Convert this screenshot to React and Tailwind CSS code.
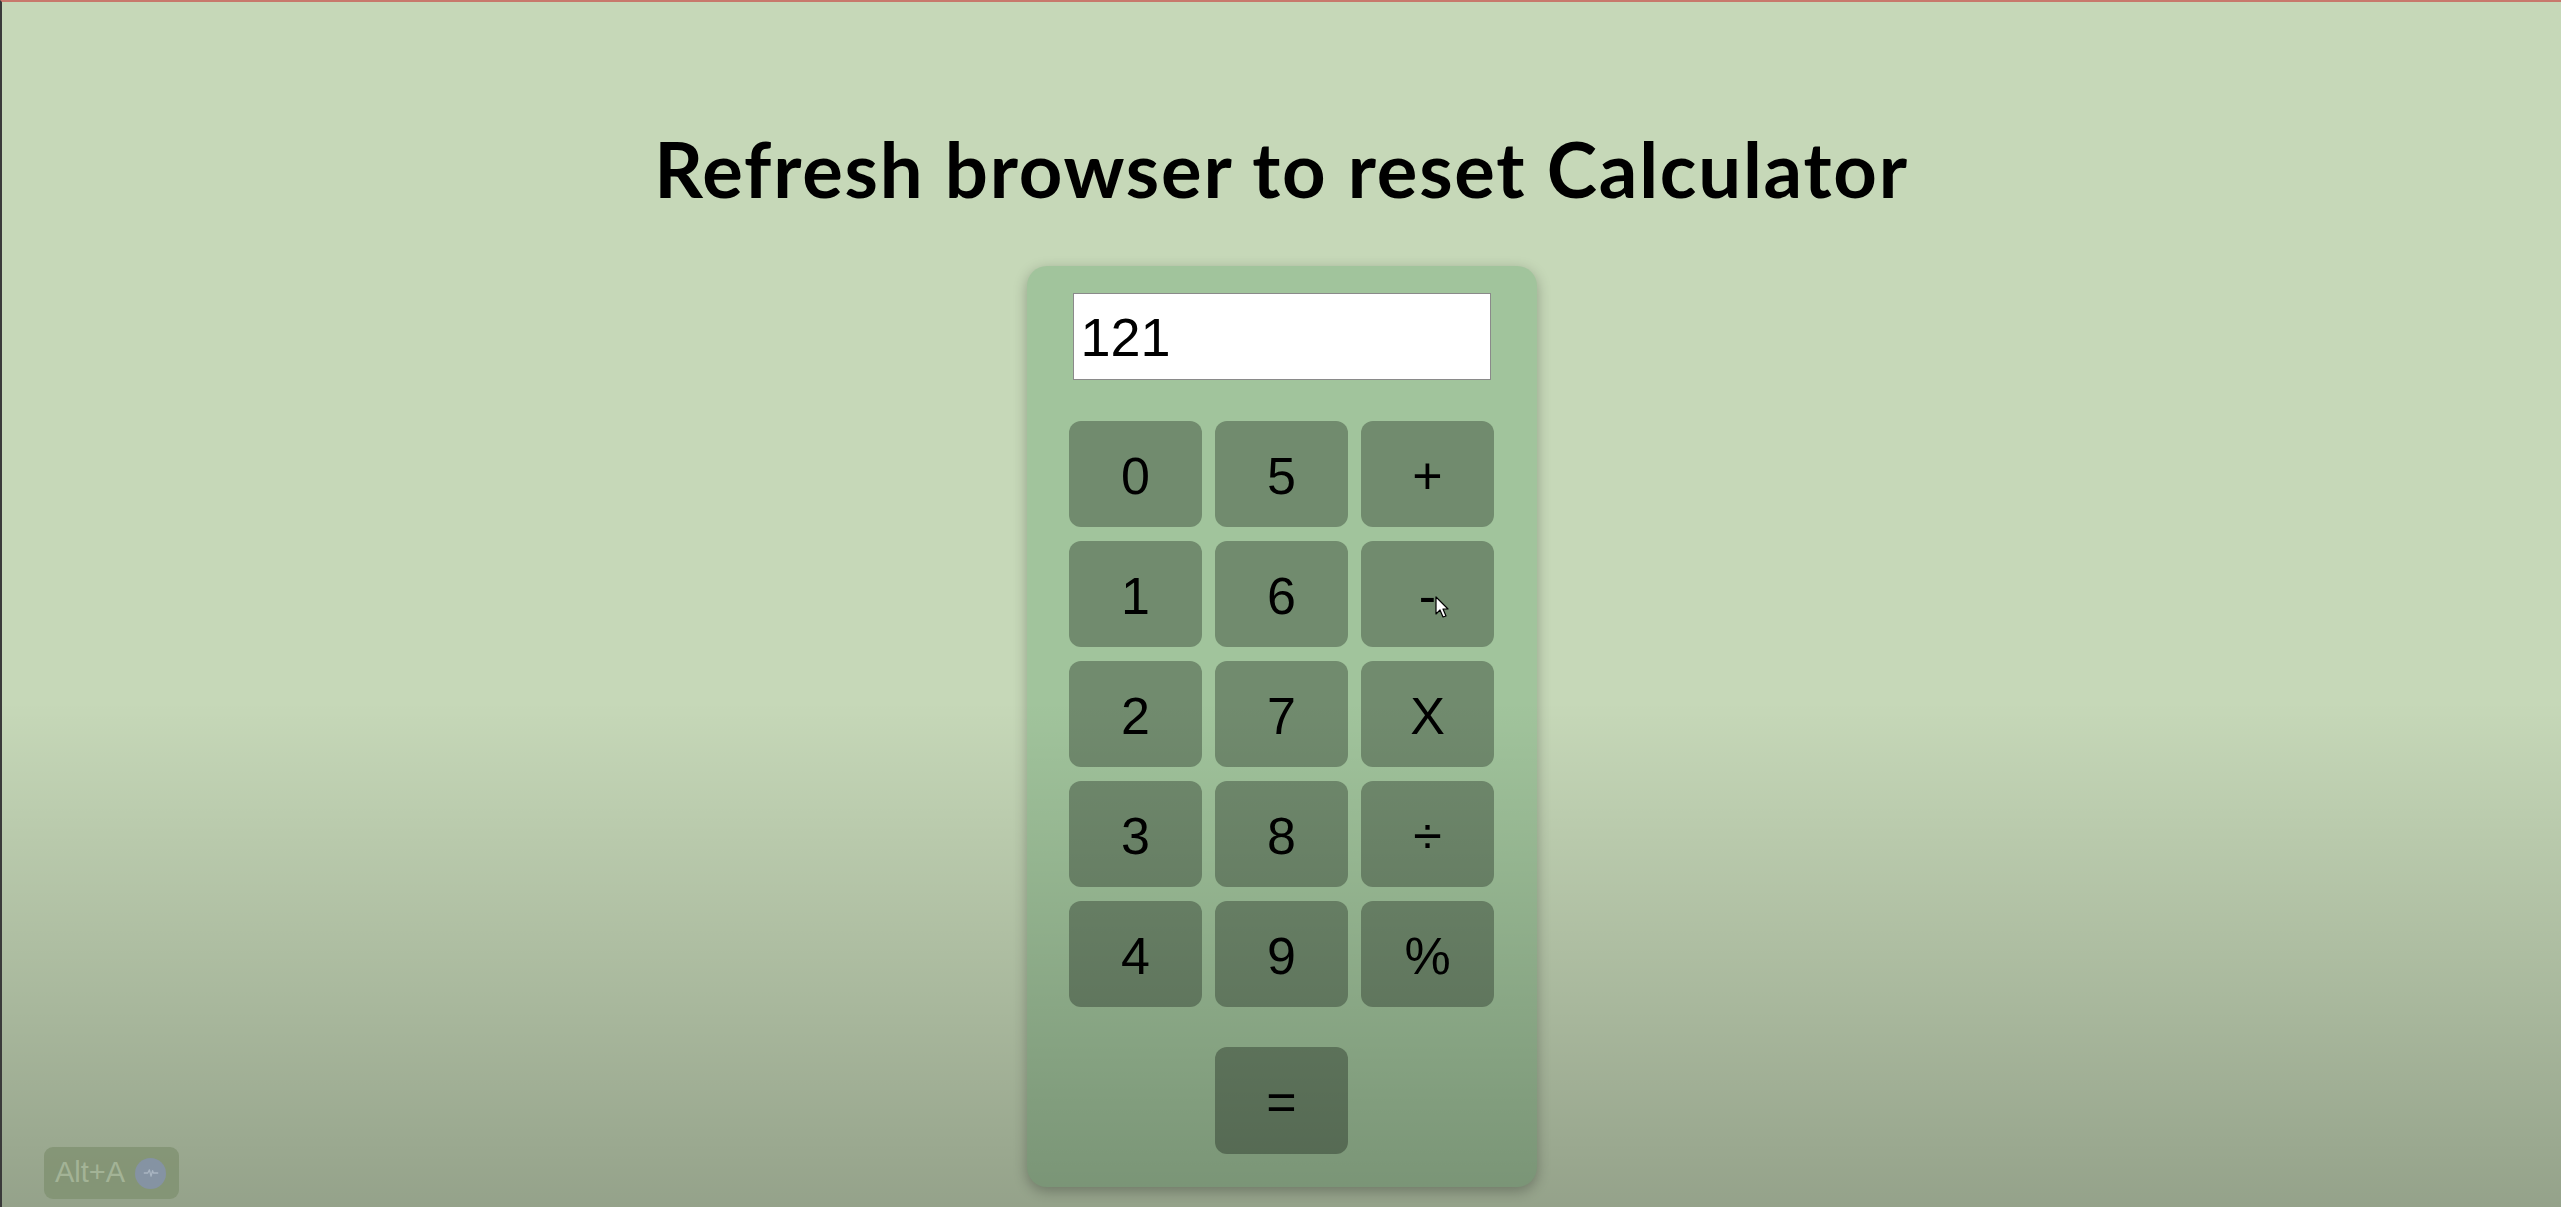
import React, { useState } from 'react';

const KEYS = ['0', '5', '+', '1', '6', '-', '2', '7', 'X', '3', '8', '÷', '4', '9', '%'];

const Cursor = () => (
  <svg className="absolute left-[74px] top-[55px] w-[16px] h-[24px]" viewBox="0 0 16 24">
    <path d="M1 1 L1 18 L5 14 L8 21 L11 20 L8 13 L13 13 Z" fill="#fff" stroke="#000" strokeWidth="1.2" strokeLinejoin="round" />
  </svg>
);

const App = () => {
  const [display, setDisplay] = useState('121');

  const press = (k) => {
    setDisplay(prev => prev + k);
  };

  return (
    <div className="relative h-[1207px] w-full overflow-hidden bg-[#c6d8b8] border-t-2 border-t-[#c8796c] border-l-2 border-l-[#3a3a3a] flex flex-col items-center">
      {/* Title */}
      <h1 className="pt-[121px] text-[76px] leading-[1.2] font-bold text-black tracking-[1.8px] font-['Lato','Open_Sans',sans-serif]">
        Refresh browser to reset Calculator
      </h1>

      {/* Calculator */}
      <div className="mt-[52px] w-[510px] rounded-[20px] bg-[#a1c49c] shadow-[0_4px_14px_rgba(0,0,0,0.28)] pt-[27px] pb-[33px] flex flex-col items-center font-['Liberation_Sans',Arial,sans-serif]">
        <input
          type="text"
          value={display}
          readOnly
          className="w-[418px] h-[87px] bg-white border border-[#8a8a8a] pl-[7px] text-[54px] text-black outline-none font-['Liberation_Sans',Arial,sans-serif]"
        />
        <div className="mt-[41px] grid grid-cols-[133px_133px_133px] gap-x-[13px] gap-y-[14px]">
          {KEYS.map(k => (
            <button
              key={k}
              onClick={() => press(k)}
              className="relative h-[106px] pt-[3px] rounded-[12px] bg-[#718b6e] text-[52px] text-black flex items-center justify-center"
            >
              {k}
              {k === '-' && <Cursor />}
            </button>
          ))}
        </div>
        <button className="mt-[40px] w-[133px] h-[107px] pt-[3px] rounded-[12px] bg-[#6f896c] text-[52px] text-black flex items-center justify-center">
          =
        </button>
      </div>

      {/* Bottom shade */}
      <div className="pointer-events-none absolute inset-0 bg-linear-to-b from-transparent from-[58%] to-black/25" />

      {/* Shortcut badge */}
      <div className="absolute left-[42px] top-[1145px] h-[52px] w-[135px] rounded-[9px] bg-[#7f9170]/80 flex items-center pl-[11px] gap-[10px] font-['Liberation_Sans',Arial,sans-serif]">
        <span className="text-[29px] text-[#a3b396]">Alt+A</span>
        <span className="w-[31px] h-[31px] rounded-full bg-[#8593a3] flex items-center justify-center">
          <svg viewBox="0 0 20 12" className="w-[16px] h-[10px]">
            <path d="M1 6 H6 L8 2 L10 10 L12 3 L13 6 H19" fill="none" stroke="#a9b5c2" strokeWidth="1.6" strokeLinejoin="round" />
          </svg>
        </span>
      </div>
    </div>
  );
};

export default App;
